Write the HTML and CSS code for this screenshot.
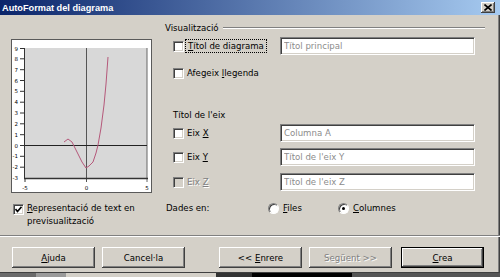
FILE: index.html
```html
<!DOCTYPE html>
<html lang="ca">
<head>
    <meta charset="UTF-8">
    <meta name="viewport" content="width=device-width, initial-scale=1.0">
    <title>AutoFormat del diagrama</title>
    <link rel="stylesheet" href="styles.css">
</head>
<body>

    <div class="window">
        <div class="titlebar">
            <span class="title">AutoFormat del diagrama</span>
            <span class="close">
                <svg width="8" height="7" viewBox="0 0 8 7"><path d="M0.5 0.5 L7.5 6.5 M7.5 0.5 L0.5 6.5" stroke="#000" stroke-width="1.6"/></svg>
            </span>
        </div>

        <div class="main">
            <div class="preview">
                <svg width="141" height="154" viewBox="0 0 141 154">
                    <rect x="0.5" y="0.5" width="140" height="153" fill="#fff" stroke="#5a5a5a"/>
                    <rect x="14" y="9" width="122" height="130" fill="#d8d8d8"/>
                    <g stroke="#333" stroke-width="1">
                        <line x1="13.5" y1="9" x2="13.5" y2="139"/>
                        <line x1="9" y1="9.5" x2="13.5" y2="9.5"/>
                        <line x1="9" y1="19.8" x2="13.5" y2="19.8"/>
                        <line x1="9" y1="30.7" x2="13.5" y2="30.7"/>
                        <line x1="9" y1="41.5" x2="13.5" y2="41.5"/>
                        <line x1="9" y1="52.3" x2="13.5" y2="52.3"/>
                        <line x1="9" y1="63.2" x2="13.5" y2="63.2"/>
                        <line x1="9" y1="74" x2="13.5" y2="74"/>
                        <line x1="9" y1="84.8" x2="13.5" y2="84.8"/>
                        <line x1="9" y1="95.7" x2="13.5" y2="95.7"/>
                        <line x1="9" y1="106.5" x2="13.5" y2="106.5"/>
                        <line x1="9" y1="117.3" x2="13.5" y2="117.3"/>
                        <line x1="9" y1="128.2" x2="13.5" y2="128.2"/>
                    </g>
                    <line x1="75.5" y1="9" x2="75.5" y2="143" stroke="#555"/>
                    <line x1="136" y1="9" x2="136" y2="143" stroke="#666"/>
                    <line x1="14" y1="106.5" x2="136" y2="106.5" stroke="#222"/>
                    <line x1="13" y1="139.5" x2="137" y2="139.5" stroke="#333" stroke-width="1.5"/>
                    <line x1="14" y1="139" x2="14" y2="143" stroke="#333"/>
                    <g class="ticklabel" text-anchor="end">
                        <text x="7" y="11.5">9</text>
                        <text x="7" y="21.8">8</text>
                        <text x="7" y="32.7">7</text>
                        <text x="7" y="43.5">6</text>
                        <text x="7" y="54.3">5</text>
                        <text x="7" y="65.2">4</text>
                        <text x="7" y="76">3</text>
                        <text x="7" y="86.8">2</text>
                        <text x="7" y="97.7">1</text>
                        <text x="7" y="108.5">0</text>
                        <text x="7" y="119.3">-1</text>
                        <text x="7" y="130.2">-2</text>
                        <text x="7" y="141">-3</text>
                    </g>
                    <g class="ticklabel" text-anchor="middle">
                        <text x="14" y="151">-5</text>
                        <text x="75.5" y="151">0</text>
                        <text x="136" y="151">5</text>
                    </g>
                    <polyline fill="none" stroke="#b5587a" stroke-width="1"
                        points="53,103 57,100 61,103 66,113 71,123 75,129 78,127 82,123 85,114 87,106 90,89 93,66 95,45 97,18"/>
                </svg>
            </div>

            <div class="options">
                <div class="group-title"><span>Visualització</span></div>

                <div class="row first">
                    <label class="opt"><span class="check"></span><span class="focus"><u>T</u>ítol de diagrama</span></label>
                    <input type="text" class="field" placeholder="Títol principal">
                </div>

                <div class="row legend">
                    <label class="opt wide"><span class="check"></span><span>Afegeix <u>l</u>legenda</span></label>
                </div>

                <div class="subtitle">Títol de l'eix</div>

                <div class="row axis-x">
                    <label class="opt"><span class="check"></span><span>Eix <u>X</u></span></label>
                    <input type="text" class="field" placeholder="Columna A">
                </div>

                <div class="row axis-y">
                    <label class="opt"><span class="check"></span><span>Eix <u>Y</u></span></label>
                    <input type="text" class="field" placeholder="Títol de l'eix Y">
                </div>

                <div class="row axis-z">
                    <label class="opt disabled"><span class="check"></span><span>Eix <u>Z</u></span></label>
                    <input type="text" class="field" placeholder="Títol de l'eix Z">
                </div>
            </div>
        </div>

        <div class="extras">
            <label class="rep"><span class="check checked">
                <svg width="7" height="7" viewBox="0 0 7 7"><path d="M0.5 3 L2.5 5.5 L6.5 0.8" fill="none" stroke="#000" stroke-width="1.6"/></svg>
            </span><span class="rep-text"><span class="line"><u>R</u>epresentació de text en</span><span class="line">previsualització</span></span></label>
            <span class="dades">Dades en:</span>
            <label class="radio-opt files"><span class="radio"></span><span><u>F</u>iles</span></label>
            <label class="radio-opt"><span class="radio on"></span><span><u>C</u>olumnes</span></label>
        </div>

        <div class="sep"></div>

        <div class="buttons">
            <button class="btn"><span><u>A</u>juda</span></button>
            <button class="btn gap-s">Cancel·la</button>
            <button class="btn gap-l">&lt;&lt; <u>E</u>nrere</button>
            <button class="btn gap-s btn-off">Següent &gt;&gt;</button>
            <button class="btn gap-m default"><span><u>C</u>rea</span></button>
        </div>

        <div class="desktop">
            <span class="d1"></span><span class="d2"></span><span class="d3"></span><span class="d4"></span><span class="d5"></span><span class="d6"></span>
        </div>
    </div>

</body>
</html>
```

FILE: styles.css
```css
body {
    margin: 0;
    font-family: "DejaVu Sans", sans-serif;
    font-size: 8.6px;
    color: #000;
    background: #d4d0c8;
}
.window {
    width: 500px;
    height: 277px;
    display: flex;
    flex-direction: column;
    background: #d4d0c8;
    overflow: hidden;
    box-shadow: inset -1px 0 #404040, inset -2px 0 #808080;
}
.titlebar {
    height: 15px;
    flex: none;
    display: flex;
    align-items: center;
    justify-content: space-between;
    padding: 0 5px 0 2px;
    background: linear-gradient(to right, #0a246a, #a6caf0);
}
.title {
    color: #fff;
    font-family: "Liberation Sans", Arial, sans-serif;
    font-weight: bold;
    font-size: 9.2px;
}
.close {
    width: 14px;
    height: 11px;
    display: flex;
    align-items: center;
    justify-content: center;
    background: #d4d0c8;
    box-shadow: inset -1px -1px #404040, inset 1px 1px #fff, inset -2px -2px #808080;
}
.main {
    height: 181px;
    flex: none;
    display: flex;
}
.preview {
    margin: 24px 0 0 11px;
    width: 141px;
    height: 154px;
}
.preview svg {
    display: block;
}
.ticklabel {
    font-family: "DejaVu Sans", sans-serif;
    font-size: 5.5px;
    fill: #000;
}
.options {
    margin-left: 13px;
    width: 320px;
}
.group-title {
    display: flex;
    align-items: center;
    height: 12px;
    margin-top: 7px;
}
.group-title::after {
    content: "";
    flex: 1;
    margin-left: 4px;
    margin-top: -1px;
    border-top: 1px solid #808080;
    border-bottom: 1px solid #fff;
}
.row {
    display: flex;
    align-items: center;
    height: 18px;
    padding-left: 8px;
}
.row.first { margin-top: 3px; }
.row.legend { margin-top: 9px; }
.row.axis-x { margin-top: 3px; }
.row.axis-y { margin-top: 6px; }
.row.axis-z { margin-top: 7px; }
.subtitle {
    height: 12px;
    line-height: 12px;
    margin-top: 27px;
    padding-left: 8px;
}
.opt {
    width: 107px;
    flex: none;
    display: flex;
    align-items: center;
}
.opt.wide {
    width: auto;
}
.check {
    width: 9px;
    height: 9px;
    flex: none;
    display: flex;
    align-items: center;
    justify-content: center;
    margin-right: 3px;
    background: #fff;
    border: 1px solid;
    border-color: #808080 #fff #fff #808080;
    box-shadow: inset 1px 1px #404040, inset -1px -1px #d4d0c8;
}
.focus {
    margin-left: -2px;
    padding: 1px 2px;
    border: 1px dotted #000;
}
.disabled {
    color: #808080;
    text-shadow: 1px 1px #fff;
}
.disabled .check {
    background: #d4d0c8;
}
.field {
    width: 195px;
    height: 18px;
    box-sizing: border-box;
    margin: 0;
    padding: 0 3px;
    font: inherit;
    background: #fff;
    border: 1px solid;
    border-color: #808080 #fff #fff #808080;
    box-shadow: inset 1px 1px #404040, inset -1px -1px #d4d0c8;
    outline: none;
}
.field::placeholder {
    color: #8c8c8c;
}
.extras {
    height: 33px;
    flex: none;
    margin-top: 6px;
    padding-left: 13px;
    display: flex;
    align-items: flex-start;
    line-height: 13px;
}
.rep {
    width: 153px;
    flex: none;
    display: flex;
    align-items: flex-start;
}
.rep .check {
    margin-top: 2px;
}
.rep-text {
    width: 118px;
}
.rep-text .line {
    display: block;
    white-space: nowrap;
}
.dades {
    width: 102px;
    flex: none;
}
.radio-opt {
    display: flex;
    align-items: center;
    height: 13px;
}
.radio-opt.files {
    width: 70px;
}
.radio {
    width: 9px;
    height: 9px;
    margin-right: 4px;
    border-radius: 50%;
    background: #fff;
    border: 1px solid;
    border-color: #808080 #fff #fff #808080;
    box-shadow: inset 1px 1px #404040;
    display: flex;
    align-items: center;
    justify-content: center;
}
.radio.on::after {
    content: "";
    width: 3px;
    height: 3px;
    border-radius: 50%;
    background: #000;
}
.sep {
    flex: none;
    border-top: 1px solid #808080;
    border-bottom: 1px solid #fff;
}
.buttons {
    flex: none;
    display: flex;
    margin-top: 10px;
    padding-left: 12px;
}
.btn {
    width: 83px;
    height: 21px;
    box-sizing: border-box;
    padding: 0;
    font: inherit;
    color: #000;
    background: #d4d0c8;
    border: none;
    box-shadow: inset -1px -1px #404040, inset 1px 1px #fff, inset -2px -2px #808080;
}
.btn.gap-s { margin-left: 7px; }
.btn.gap-l { margin-left: 34px; }
.btn.gap-m { margin-left: 9px; }
.btn.btn-off {
    color: #808080;
    text-shadow: 1px 1px #fff;
}
.btn.default {
    border: 1px solid #000;
}
.desktop {
    flex: none;
    margin-top: 4px;
    height: 5px;
    display: flex;
    border-top: 1px solid #404040;
    background: #1a1a1a;
}
.desktop span { height: 100%; }
.d1 { width: 36px; background: #6a6a6a; }
.d2 { width: 30px; background: #9a9a9a; }
.d3 { width: 150px; background: #d4d0c8; }
.d4 { width: 36px; background: #333; }
.d5 { width: 100px; background: #000; }
.d6 { flex: 1; background: #555; }
```
